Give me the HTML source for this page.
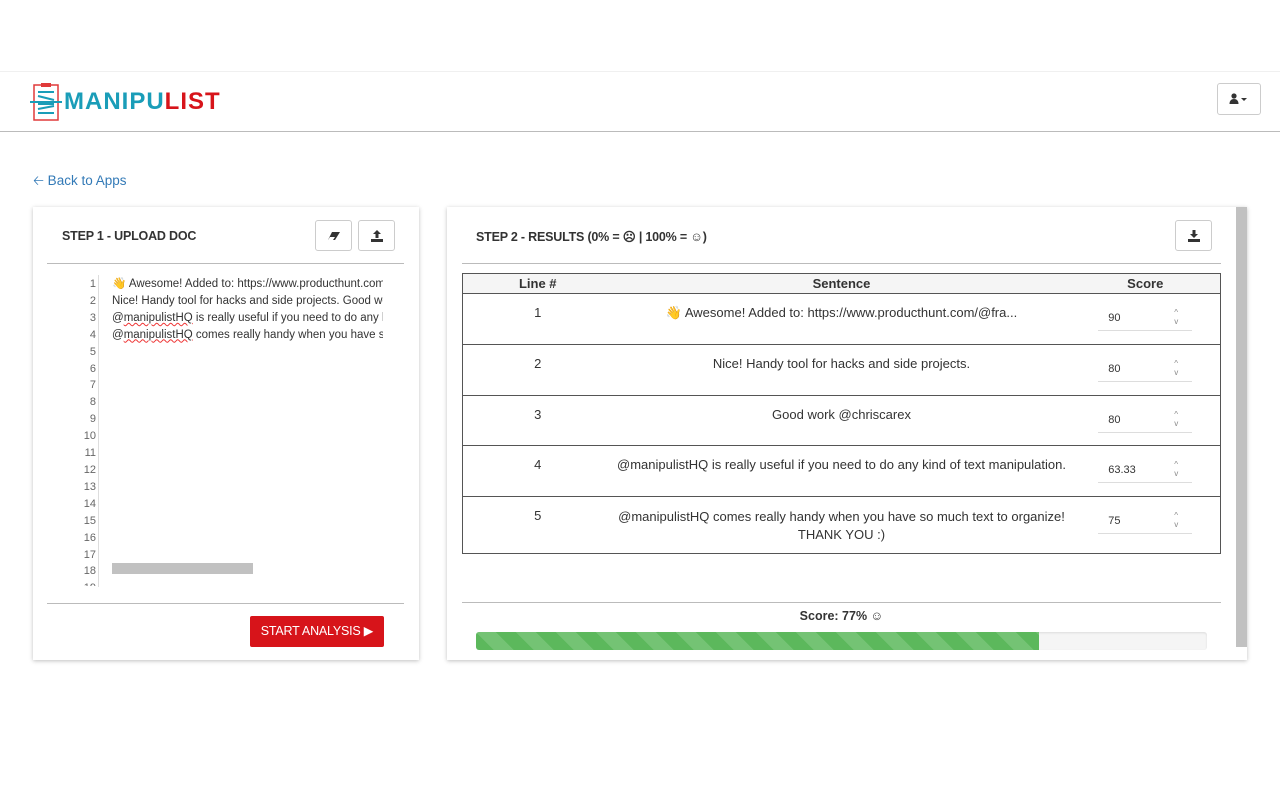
<!DOCTYPE html>
<html><head><meta charset="utf-8"><style>
*{box-sizing:border-box;margin:0;padding:0}
body{width:1280px;height:800px;background:#fff;font-family:"Liberation Sans",sans-serif;color:#333;position:relative;overflow:hidden;font-size:13px}
.abs{position:absolute}
.nav{top:71px;left:0;width:1280px;height:61px;border-top:1px solid #f0f0f0;border-bottom:1px solid #bbb}
.panel{background:#fff;box-shadow:0 1px 4px rgba(0,0,0,.25)}
.btn{border:1px solid #ccc;border-radius:3px;background:#fff;width:37px;height:31px;display:flex;align-items:center;justify-content:center}
h3{font-size:12.5px;font-weight:bold;color:#333;letter-spacing:-0.2px}
.ln{position:absolute;width:48px;text-align:right;font-size:11px;color:#666;line-height:16.9px}
.code{font-size:11.5px;line-height:16.9px;white-space:nowrap;overflow:hidden}
.sq{text-decoration:underline wavy #e33;text-decoration-thickness:1px}
table{border-collapse:collapse;width:759px;font-size:13px}
td,th{border-top:1px solid #555;text-align:center;vertical-align:top}
th{background:#f5f5f5;height:20px;font-size:13px;line-height:19px}
.sc{display:inline-block;width:94px;border-bottom:1px solid #ddd;text-align:left;padding:8px 0 6px 10px;font-size:11px;position:relative;margin-top:10px}
.sc span{position:absolute;right:14px;top:4px;font-size:8px;color:#888;line-height:9px}
</style></head><body>
<div class="abs nav">
  <svg class="abs" style="left:30px;top:10px" width="32" height="40" viewBox="0 0 32 40"><rect x="4" y="3" width="24" height="35" fill="none" stroke="#e03a3a" stroke-width="1.5"/><rect x="11" y="1" width="10" height="4" fill="#e03a3a"/><path d="M8 10h16M8 14l16 4M8 22h16M8 27l16-3M8 31h16" stroke="#1a9db8" stroke-width="2"/><path d="M0 20h34" stroke="#1a9db8" stroke-width="2"/></svg>
  <div class="abs" style="left:64px;top:16px;font-size:24px;font-weight:bold;letter-spacing:1px;color:#1a9db8">MANIPU<span style="color:#d7141a">LIST</span></div>
  <div class="abs btn" style="left:1217px;top:11px;width:44px;height:32px">
    <svg width="20" height="12" viewBox="0 0 20 12"><circle cx="5" cy="3" r="2.6" fill="#333"/><path d="M0.5 11c0-3.5 2-5 4.5-5s4.5 1.5 4.5 5z" fill="#333"/><path d="M12 5h6l-3 3z" fill="#333"/></svg>
  </div>
</div>
<div class="abs" style="left:33px;top:171px;color:#337ab7;font-size:13.5px">&#129120; Back to Apps</div>

<div class="abs panel" style="left:33px;top:207px;width:386px;height:453px">
  <h3 class="abs" style="left:29px;top:22px">STEP 1 - UPLOAD DOC</h3>
  <div class="abs btn" style="left:282px;top:13px"><svg width="14" height="10" viewBox="0 0 14 10"><path d="M5 1h8l-5 8H1z" fill="#333"/><path d="M3 6h5l-2 3H1z" fill="#fff"/></svg></div>
  <div class="abs btn" style="left:325px;top:13px"><svg width="12" height="12" viewBox="0 0 12 12"><path d="M6 0l4 4H7.5v4h-3V4H2z" fill="#333"/><path d="M0 9h12v3H0z" fill="#333"/></svg></div>
  <div class="abs" style="left:14px;top:56px;width:357px;border-top:1px solid #bbb"></div>
  <div class="abs" style="left:65px;top:68px;height:312px;border-left:1px solid #ddd"></div>
  <div class="ln" style="top:69px;left:15px;height:310px;overflow:hidden">1<br>2<br>3<br>4<br>5<br>6<br>7<br>8<br>9<br>10<br>11<br>12<br>13<br>14<br>15<br>16<br>17<br>18<br>19</div>
  <div class="abs code" style="left:79px;top:69px;width:271px">👋 Awesome! Added to: https://www.producthunt.com/@fra<br>Nice! Handy tool for hacks and side projects. Good work<br>@<span class="sq">manipulistHQ</span> is really useful if you need to do any kind<br>@<span class="sq">manipulistHQ</span> comes really handy when you have so much</div>
  <div class="abs" style="left:79px;top:356px;width:141px;height:11px;background:#c1c1c1"></div>
  <div class="abs" style="left:14px;top:396px;width:357px;border-top:1px solid #bbb"></div>
  <div class="abs" style="left:217px;top:409px;width:134px;height:31px;background:#d7141a;border-radius:2px;color:#fff;font-size:12.5px;line-height:31px;text-align:center;letter-spacing:-0.2px">START ANALYSIS ▶</div>
</div>

<div class="abs panel" style="left:447px;top:207px;width:800px;height:453px">
  <h3 class="abs" style="left:29px;top:22px">STEP 2 - RESULTS (0% = ☹ | 100% = ☺)</h3>
  <div class="abs btn" style="left:728px;top:13px"><svg width="12" height="12" viewBox="0 0 12 12"><path d="M6 8l4-4H7.5V0h-3v4H2z" fill="#333"/><path d="M0 9h12v3H0z" fill="#333"/></svg></div>
  <div class="abs" style="left:15px;top:56px;width:759px;border-top:1px solid #bbb"></div>
  <div class="abs" style="left:789px;top:0;width:11px;height:440px;background:#c1c1c1"></div>
  <table class="abs" style="left:15px;top:66px;border:1px solid #555">
    <tr><th style="width:150px">Line #</th><th>Sentence</th><th style="width:150px">Score</th></tr>
    <tr style="height:51px"><td style="padding-top:11px">1</td><td style="padding-top:11px">👋 Awesome! Added to: https://www.producthunt.com/@fra...</td><td><div class="sc">90<span>^<br>v</span></div></td></tr>
    <tr style="height:51px"><td style="padding-top:11px">2</td><td style="padding-top:11px">Nice! Handy tool for hacks and side projects.</td><td><div class="sc">80<span>^<br>v</span></div></td></tr>
    <tr style="height:50px"><td style="padding-top:11px">3</td><td style="padding-top:11px">Good work @chriscarex</td><td><div class="sc">80<span>^<br>v</span></div></td></tr>
    <tr style="height:51px"><td style="padding-top:11px">4</td><td style="padding-top:11px">@manipulistHQ is really useful if you need to do any kind of text manipulation.</td><td><div class="sc">63.33<span>^<br>v</span></div></td></tr>
    <tr style="height:57px"><td style="padding-top:11px">5</td><td style="padding-top:11px;line-height:18px">@manipulistHQ comes really handy when you have so much text to organize!<br>THANK YOU :)</td><td><div class="sc">75<span>^<br>v</span></div></td></tr>
  </table>
  <div class="abs" style="left:15px;top:395px;width:759px;border-top:1px solid #bbb"></div>
  <div class="abs" style="left:0;top:402px;width:789px;text-align:center;font-weight:bold;font-size:12.5px">Score: 77% ☺</div>
  <div class="abs" style="left:29px;top:425px;width:731px;height:18px;background:#f5f5f5;border-radius:3px;overflow:hidden;box-shadow:inset 0 1px 2px rgba(0,0,0,.1)">
    <div style="width:563px;height:18px;background-color:#5cb85c;background-image:linear-gradient(45deg,rgba(255,255,255,.15) 25%,transparent 25%,transparent 50%,rgba(255,255,255,.15) 50%,rgba(255,255,255,.15) 75%,transparent 75%,transparent);background-size:40px 40px"></div>
  </div>
</div>
</body></html>
